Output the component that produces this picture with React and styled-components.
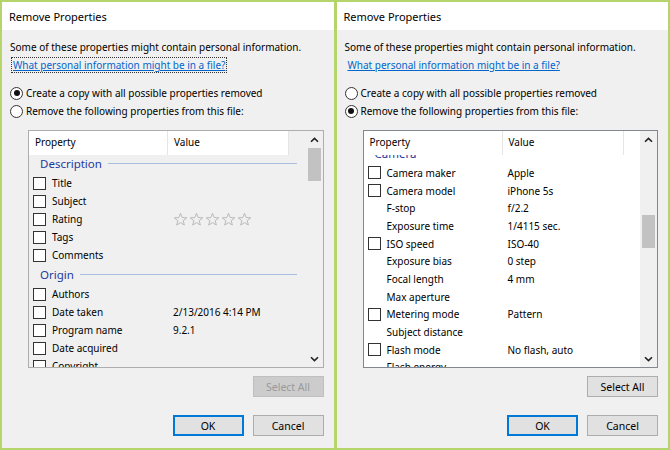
import React from "react"
import styled, { createGlobalStyle } from "styled-components"

const GlobalStyle = createGlobalStyle`
  html, body {
    margin: 0;
    padding: 0;
    background: #b5d56c;
  }
  body {
    font-family: "Noto Sans", "Open Sans", sans-serif;
    font-size: 10px;
    color: #000;
  }
`

const leftRows = [
  { group: "Description" },
  { check: true, label: "Title" },
  { check: true, label: "Subject" },
  { check: true, label: "Rating", stars: true },
  { check: true, label: "Tags" },
  { check: true, label: "Comments" },
  { group: "Origin" },
  { check: true, label: "Authors" },
  { check: true, label: "Date taken", value: "2/13/2016 4:14 PM" },
  { check: true, label: "Program name", value: "9.2.1" },
  { check: true, label: "Date acquired" },
  { check: true, label: "Copyright" },
]

const rightRows = [
  { group: "Camera" },
  { check: true, label: "Camera maker", value: "Apple" },
  { check: true, label: "Camera model", value: "iPhone 5s" },
  { label: "F-stop", value: "f/2.2" },
  { label: "Exposure time", value: "1/4115 sec." },
  { check: true, label: "ISO speed", value: "ISO-40" },
  { label: "Exposure bias", value: "0 step" },
  { label: "Focal length", value: "4 mm" },
  { label: "Max aperture" },
  { check: true, label: "Metering mode", value: "Pattern" },
  { label: "Subject distance" },
  { check: true, label: "Flash mode", value: "No flash, auto" },
  { label: "Flash energy" },
]

const Star = () => (
  <svg width="15" height="15" viewBox="0 0 16 16">
    <polygon
      points="8,1.5 9.9,6 14.6,6.2 10.9,9.2 12.1,13.9 8,11.3 3.9,13.9 5.1,9.2 1.4,6.2 6.1,6"
      fill="none"
      stroke="#b4b4b4"
      strokeWidth="1"
    />
  </svg>
)

const Chevron = ({ down }) => (
  <svg width="9" height="6" viewBox="0 0 9 6">
    <path
      d={down ? "M1 1.2 L4.5 4.6 L8 1.2" : "M1 4.8 L4.5 1.4 L8 4.8"}
      fill="none"
      stroke="#222"
      strokeWidth="1.6"
    />
  </svg>
)

const PropertyList = ({ rows, disabled, offset, rowHeight, thumbTop }) => (
  <ListBox $disabled={disabled}>
    <ListContent>
      <ListHeader $disabled={disabled}>
        <HeaderCell $w={139}>Property</HeaderCell>
        <HeaderCell $w={121}>Value</HeaderCell>
        <HeaderFiller $disabled={disabled} />
      </ListHeader>
      <ListViewport>
        <ListInner style={{ transform: `translateY(${offset}px)` }}>
          {rows.map((r, i) =>
            r.group ? (
              <GroupRow key={i}>
                <GroupLabel>{r.group}</GroupLabel>
                <GroupLine />
              </GroupRow>
            ) : (
              <ItemRow key={i} $h={rowHeight}>
                <CheckCell>{r.check && <CheckBox />}</CheckCell>
                <LabelCell>{r.label}</LabelCell>
                <ValueCell>
                  {r.stars ? (
                    <Stars>
                      <Star />
                      <Star />
                      <Star />
                      <Star />
                      <Star />
                    </Stars>
                  ) : (
                    r.value
                  )}
                </ValueCell>
              </ItemRow>
            )
          )}
        </ListInner>
      </ListViewport>
    </ListContent>
    <ScrollBar>
      <ScrollArrow>
        <Chevron />
      </ScrollArrow>
      <ScrollTrack>
        <ScrollThumb style={{ marginTop: thumbTop }} />
      </ScrollTrack>
      <ScrollArrow>
        <Chevron down />
      </ScrollArrow>
    </ScrollBar>
  </ListBox>
)

const RemoveDialog = ({ copyMode, rows, offset, rowHeight, thumbTop }) => (
  <Dialog>
    <TitleBar>Remove Properties</TitleBar>
    <Body>
      <Intro>Some of these properties might contain personal information.</Intro>
      <LinkLine>
        <InfoLink href="#" $focused={copyMode}>
          What personal information might be in a file?
        </InfoLink>
      </LinkLine>
      <Options>
        <RadioLine>
          <Radio $checked={copyMode} />
          Create a copy with all possible properties removed
        </RadioLine>
        <RadioLine>
          <Radio $checked={!copyMode} />
          Remove the following properties from this file:
        </RadioLine>
      </Options>
      <PropertyList
        rows={rows}
        disabled={copyMode}
        offset={offset}
        rowHeight={rowHeight}
        thumbTop={thumbTop}
      />
      <SelectRow>
        <Button disabled={copyMode}>Select All</Button>
      </SelectRow>
      <ButtonRow>
        <Button $primary>OK</Button>
        <Button>Cancel</Button>
      </ButtonRow>
    </Body>
  </Dialog>
)

export default function App() {
  return (
    <>
      <GlobalStyle />
      <Frame>
        <RemoveDialog copyMode rows={leftRows} offset={-2} rowHeight={18} thumbTop={0} />
        <RemoveDialog
          rows={rightRows}
          offset={-12}
          rowHeight={17.7}
          thumbTop={67}
        />
      </Frame>
    </>
  )
}

const Frame = styled.div`
  display: flex;
  gap: 3px;
  width: 670px;
  height: 450px;
  padding: 2px;
  box-sizing: border-box;
  background: #b5d56c;
`

const Dialog = styled.div`
  flex: 1;
  display: flex;
  flex-direction: column;
  background: #f0f0f0;
  min-width: 0;
`

const TitleBar = styled.div`
  height: 28px;
  display: flex;
  align-items: center;
  padding-left: 7px;
  background: #fff;
  font-size: 11px;
`

const Body = styled.div`
  flex: 1;
  display: flex;
  flex-direction: column;
  padding: 8px 10px 0 8px;
`

const Intro = styled.div`
  height: 18px;
  line-height: 18px;
  white-space: nowrap;
`

const LinkLine = styled.div`
  height: 18px;
  display: flex;
  align-items: center;
`

const InfoLink = styled.a`
  color: #0066cc;
  text-decoration: underline;
  line-height: 14px;
  padding: 0 1px;
  margin-left: 2px;
  outline: ${(p) => (p.$focused ? "1px dotted #333" : "none")};
  white-space: nowrap;
`

const Options = styled.div`
  margin-top: 10px;
  display: flex;
  flex-direction: column;
`

const RadioLine = styled.label`
  height: 18px;
  display: flex;
  align-items: center;
  gap: 3px;
  white-space: nowrap;
`

const Radio = styled.span`
  width: 11px;
  height: 11px;
  border: 1px solid #333;
  border-radius: 50%;
  background: #fff;
  display: flex;
  align-items: center;
  justify-content: center;

  &::after {
    content: "";
    width: 6px;
    height: 6px;
    border-radius: 50%;
    background: ${(p) => (p.$checked ? "#111" : "transparent")};
  }
`

const ListBox = styled.div`
  margin: 10px 0 0 18px;
  height: 238px;
  box-sizing: border-box;
  border: 1px solid ${(p) => (p.$disabled ? "#adadad" : "#828790")};
  background: ${(p) => (p.$disabled ? "#f0f0f0" : "#fff")};
  display: flex;
`

const ListContent = styled.div`
  flex: 1;
  display: flex;
  flex-direction: column;
  min-width: 0;
`

const ListHeader = styled.div`
  height: 24px;
  display: flex;
  flex-shrink: 0;
`

const HeaderCell = styled.div`
  width: ${(p) => p.$w}px;
  box-sizing: border-box;
  padding-left: 6px;
  padding-top: 4px;
  background: #fff;
  border-right: 1px solid #e5e5e5;
`

const HeaderFiller = styled.div`
  flex: 1;
  background: ${(p) => (p.$disabled ? "transparent" : "#fff")};
`

const ListViewport = styled.div`
  flex: 1;
  overflow: hidden;
`

const ListInner = styled.div`
  display: flex;
  flex-direction: column;
`

const GroupRow = styled.div`
  height: 21px;
  display: flex;
  align-items: center;
  padding-left: 11px;
  padding-right: 9px;
  flex-shrink: 0;
`

const GroupLabel = styled.span`
  color: #1f3a9e;
  font-size: 11.5px;
`

const GroupLine = styled.span`
  flex: 1;
  height: 1px;
  margin-left: 6px;
  background: #a9bde0;
`

const ItemRow = styled.div`
  height: ${(p) => p.$h}px;
  display: flex;
  align-items: center;
  flex-shrink: 0;
  white-space: nowrap;
`

const CheckCell = styled.div`
  width: 23px;
  padding-left: 4px;
  box-sizing: border-box;
  display: flex;
  align-items: center;
`

const CheckBox = styled.span`
  width: 11px;
  height: 11px;
  border: 1px solid #333;
  background: #fff;
`

const LabelCell = styled.div`
  width: 121px;
`

const ValueCell = styled.div`
  flex: 1;
  display: flex;
  align-items: center;
`

const Stars = styled.div`
  display: flex;
  gap: 1px;
`

const ScrollBar = styled.div`
  width: 17px;
  display: flex;
  flex-direction: column;
  background: #f0f0f0;
`

const ScrollArrow = styled.div`
  height: 17px;
  display: flex;
  align-items: center;
  justify-content: center;
`

const ScrollTrack = styled.div`
  flex: 1;
  display: flex;
  flex-direction: column;
  align-items: center;
`

const ScrollThumb = styled.div`
  width: 13px;
  height: 33px;
  background: #c2c2c2;
`

const SelectRow = styled.div`
  margin-top: 8px;
  display: flex;
  justify-content: flex-end;
`

const ButtonRow = styled.div`
  margin-top: 18px;
  display: flex;
  justify-content: flex-end;
  gap: 9px;
`

const Button = styled.button`
  width: 71px;
  height: 21px;
  box-sizing: border-box;
  font-family: inherit;
  font-size: 10.5px;
  color: #000;
  background: #e1e1e1;
  border: 1px solid #adadad;
  padding: 0;

  ${(p) =>
    p.$primary &&
    `
    border-color: #0078d7;
    box-shadow: inset 0 0 0 1px #0078d7;
  `}

  &:disabled {
    background: #cccccc;
    border-color: #bfbfbf;
    color: #9a9a9a;
  }
`
